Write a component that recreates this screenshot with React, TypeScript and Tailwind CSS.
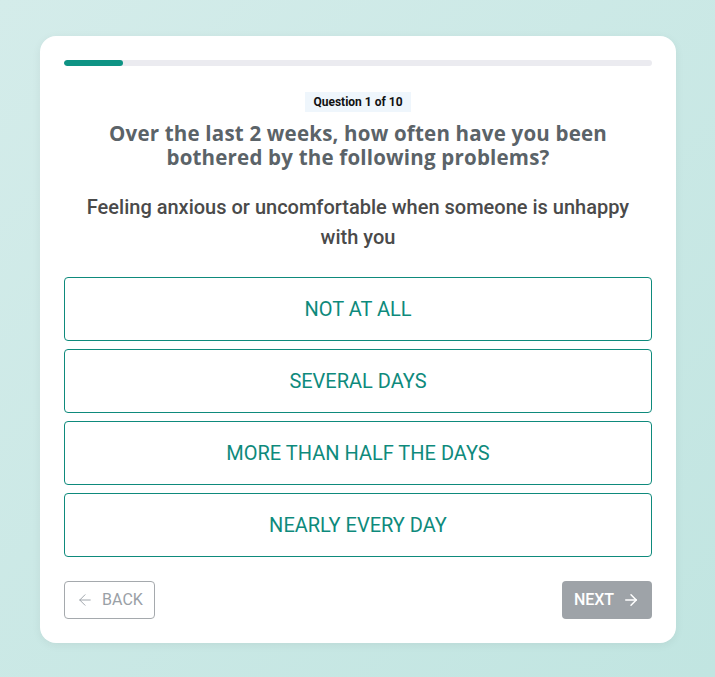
import { ArrowLeft, ArrowRight } from "lucide-react";

const options = ["NOT AT ALL", "SEVERAL DAYS", "MORE THAN HALF THE DAYS", "NEARLY EVERY DAY"];

export default function App() {
  return (
    <div className="min-h-[677px] w-full bg-gradient-to-br from-[#d4ecea] to-[#c1e5e1] pt-9 px-10 font-['Roboto',sans-serif]">
      <div className="w-[636px] bg-white rounded-2xl shadow-[0_2px_10px_rgba(0,0,0,0.06)] px-6 pt-6 pb-6">
        <div className="h-[6px] w-full rounded-full bg-[#ebebf0] overflow-hidden">
          <div className="h-full w-[10%] bg-[#0e9384] rounded-full" />
        </div>

        <div className="mt-[26px] flex justify-center">
          <span className="bg-[#eff6fc] px-2 py-[3px] text-xs font-bold text-[#111] leading-[14px]">
            Question 1 of 10
          </span>
        </div>

        <h1 className="mt-[9px] text-center text-[20.5px] leading-6 font-bold text-[#5b6368] font-['Open_Sans',sans-serif] tracking-[0.2px]">
          Over the last 2 weeks, how often have you been
          <br />
          bothered by the following problems?
        </h1>

        <p className="mt-[23px] text-center text-[20px] leading-[30px] font-medium text-[#4a4a4a] px-4">
          Feeling anxious or uncomfortable when someone is unhappy with you
        </p>

        <div className="mt-[25px] flex flex-col gap-2">
          {options.map((o) => (
            <button
              key={o}
              className="h-16 w-full rounded border border-[#0e8a7c] text-[20px] text-[#0e8a7c] bg-white"
            >
              {o}
            </button>
          ))}
        </div>

        <div className="mt-6 flex justify-between">
          <button className="h-[38px] w-[91px] flex items-center justify-center gap-2 border border-[#a5a9ad] rounded-sm text-[16px] text-[#9aa0a6]">
            <ArrowLeft size={18} strokeWidth={1.25} />
            BACK
          </button>
          <button className="h-[38px] w-[90px] flex items-center justify-center gap-2 bg-[#9ea3a8] rounded-sm text-[16px] font-medium text-white">
            NEXT
            <ArrowRight size={18} strokeWidth={2} />
          </button>
        </div>
      </div>
    </div>
  );
}
